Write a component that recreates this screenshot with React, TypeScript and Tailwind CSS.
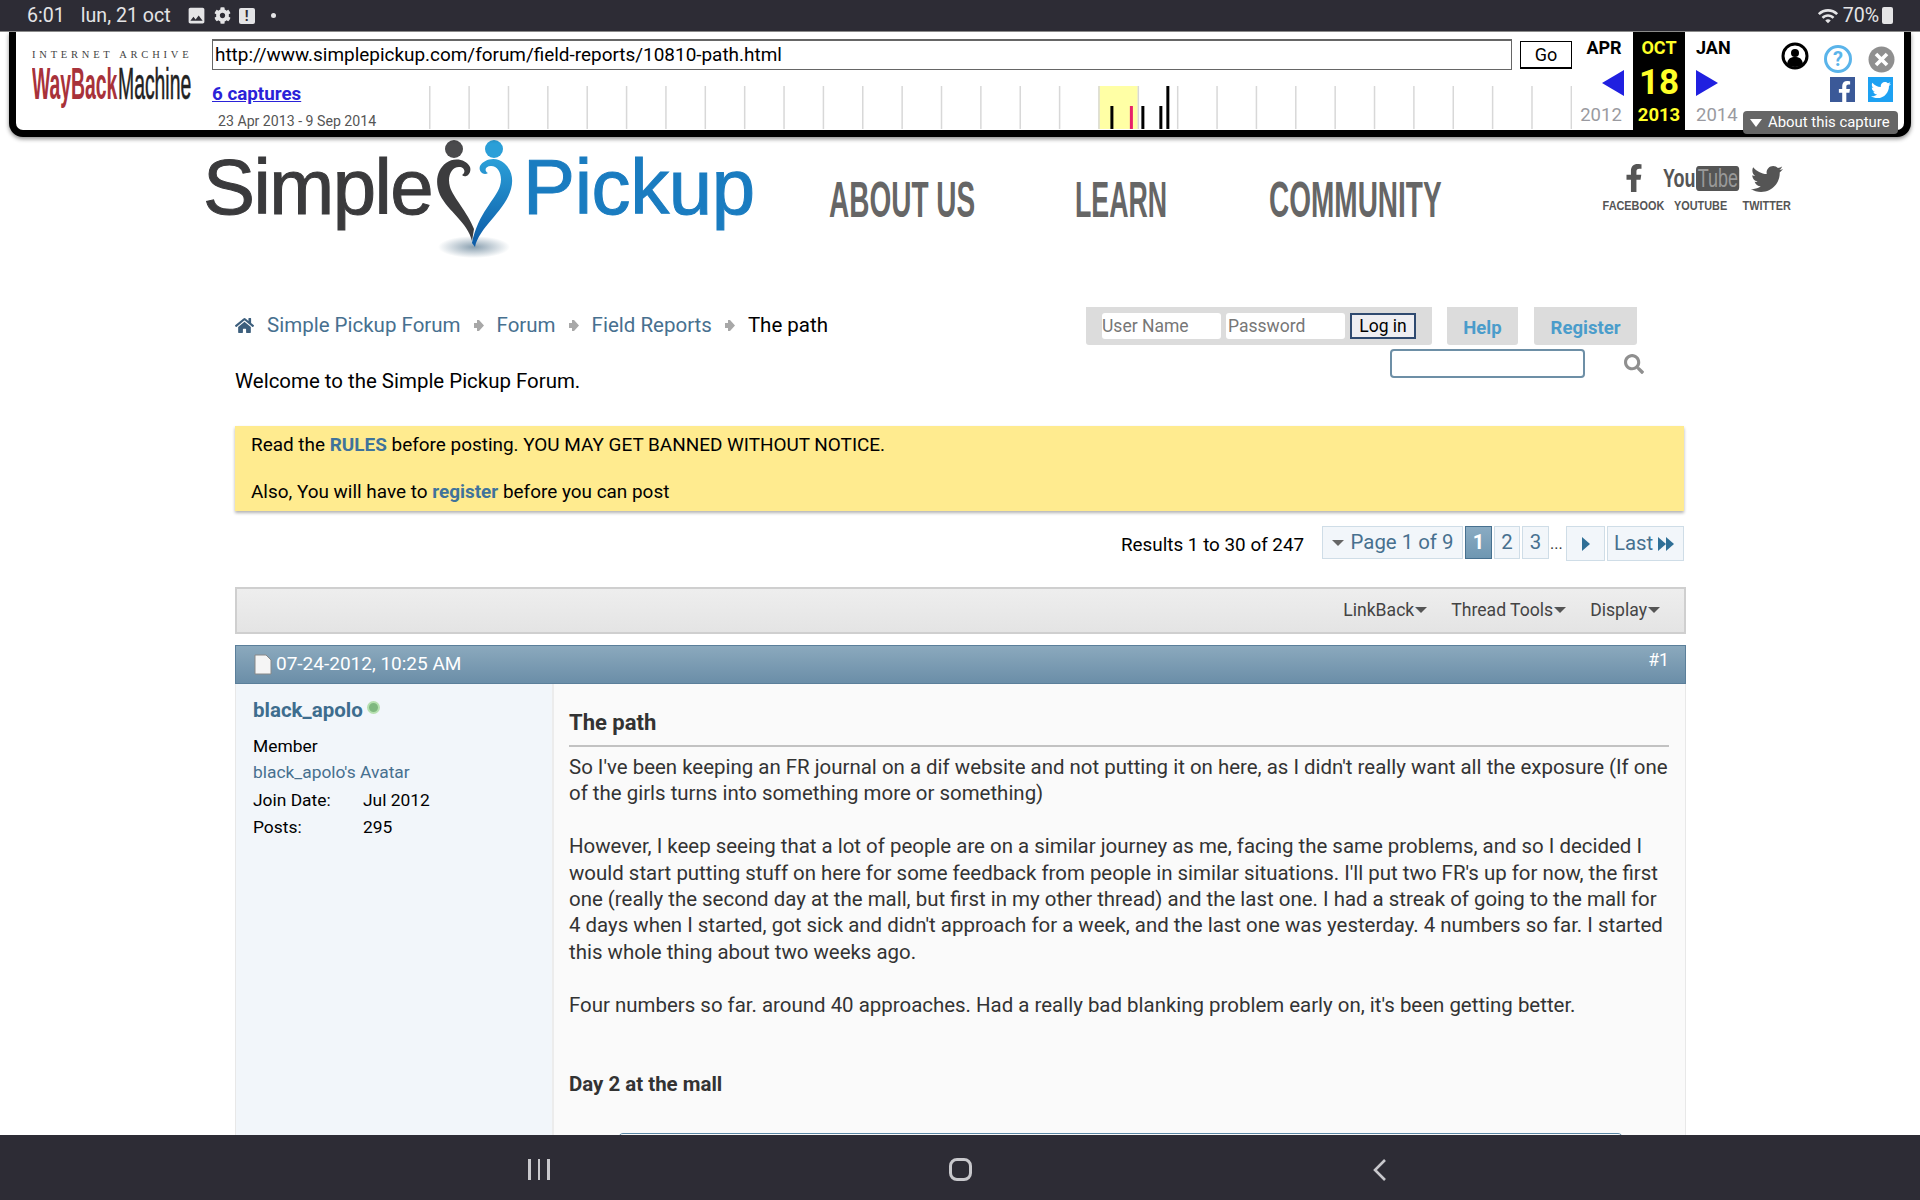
import { FaFacebookF, FaTwitter, FaHome, FaSearch, FaCog } from "react-icons/fa";
import { MdImage, MdWifi } from "react-icons/md";

const ticks = Array.from({ length: 31 }, (_, i) => i * 39.4);

function Caret({ className }: { className: string }) {
  return <span className={`inline-block w-0 h-0 border-x-[6px] border-x-transparent border-t-[6px] ${className}`} />;
}

// sparkline of captures under the url box
function Sparkline() {
  return (
    <svg width="1144" height="43" viewBox="0 0 1144 43" className="block">
      <rect x="670" y="0" width="39.4" height="43" fill="#ffffa5" />
      {ticks.map((x) => (
        <rect key={x} x={x} y="0" width="1.5" height="43" fill="#d8d8d8" />
      ))}
      <rect x="682" y="20" width="3" height="23" fill="#000" />
      <rect x="701.5" y="20" width="3" height="23" fill="#e8206a" />
      <rect x="713" y="20" width="3" height="23" fill="#000" />
      <rect x="731" y="20" width="3" height="23" fill="#000" />
      <rect x="738" y="0" width="3" height="43" fill="#000" />
    </svg>
  );
}

function WaybackBar() {
  return (
    <div className="relative z-10 mx-[9px] h-[105px] bg-white border-x-[7px] border-b-[7px] border-black rounded-b-[14px] shadow-[0_2px_4px_rgba(0,0,0,0.45)] flex">
      <div className="w-[196px] shrink-0 pl-[16px] pt-[15px]">
        <div className="w-[160px] text-[10.5px] leading-[16px] text-[#444] tracking-[0.36em] whitespace-nowrap font-['Liberation_Serif',serif]">INTERNET ARCHIVE</div>
        <div className="w-[160px] h-[42px] flex whitespace-nowrap font-['Liberation_Sans',sans-serif] text-[44px] leading-[42px]">
          <span className="w-[86px] inline-block origin-left scale-x-[0.44] font-bold text-[#a8323a]">WayBack</span>
          <span className="w-[73px] inline-block origin-left scale-x-[0.44] text-[#222] [-webkit-text-stroke:0.6px_#222]">Machine</span>
        </div>
      </div>
      <div className="w-[1360px] shrink-0 flex flex-col">
        <div className="flex pt-[7px] h-[54px] gap-[8px] items-start">
          <div className="w-[1301px] h-[31px] border border-[#666] border-t-2 px-[2px] text-[18.93px] leading-[27px] text-black whitespace-nowrap">http://www.simplepickup.com/forum/field-reports/10810-path.html</div>
          <div className="mt-[2px] w-[52px] h-[28px] border border-black border-b-2 text-center text-[18px] leading-[26px] text-black">Go</div>
        </div>
        <div className="flex">
          <div className="w-[217px] shrink-0 -mt-[2px]">
            <div className="text-[18.8px] font-bold leading-[20px] text-[#2a22d8] underline">6 captures</div>
            <div className="pl-[6px] pt-[9px] text-[14.15px] leading-[16px] text-[#555]">23 Apr 2013 - 9 Sep 2014</div>
          </div>
          <Sparkline />
        </div>
      </div>
      <div className="ml-[9px] w-[52px] shrink-0 flex flex-col items-center font-bold">
        <div className="pt-[6px] pr-[6px] text-[18px] leading-[20px] text-black">APR</div>
        <div className="flex-1 w-full flex items-center justify-end pt-[3px] pr-[9px]">
          <span className="w-0 h-0 border-y-[13px] border-y-transparent border-r-[22px] border-r-[#2020e0]" />
        </div>
        <div className="pb-[4px] pr-[12px] text-[18.5px] leading-[22px] font-normal text-[#9a9aa0] whitespace-nowrap">2012</div>
      </div>
      <div className="w-[52px] shrink-0 bg-black flex flex-col items-center font-bold text-[#ffff28]">
        <div className="pt-[6px] text-[18px] leading-[20px]">OCT</div>
        <div className="flex-1 flex items-center pt-[2px] text-[35px] leading-none">18</div>
        <div className="pb-[4px] text-[18.5px] leading-[22px]">2013</div>
      </div>
      <div className="w-[56px] shrink-0 flex flex-col items-start pl-[11px] font-bold">
        <div className="pt-[6px] text-[18px] leading-[20px] text-black">JAN</div>
        <div className="flex-1 flex items-center pt-[3px]">
          <span className="w-0 h-0 border-y-[13px] border-y-transparent border-l-[22px] border-l-[#2020e0]" />
        </div>
        <div className="pb-[4px] text-[18.5px] leading-[22px] font-normal text-[#9a9aa0]">2014</div>
      </div>
      <div className="flex-1 pt-[10px] pl-[40px]">
        <div className="flex items-start">
          <svg width="28" height="28" viewBox="0 0 28 28">
            <circle cx="14" cy="14" r="12" fill="#fff" stroke="#000" strokeWidth="3" />
            <circle cx="14" cy="11" r="4" fill="#000" />
            <path d="M6 22c1-6 4-7 8-7s7 1 8 7a12 12 0 0 1-16 0z" fill="#000" />
          </svg>
          <div className="ml-[15px] mt-[3px] w-[28px] h-[28px] rounded-full border-[3px] border-[#5ab4ea] text-[#5ab4ea] text-center text-[20px] leading-[22px] font-bold">?</div>
          <svg width="27" height="27" viewBox="0 0 27 27" className="ml-[16px] mt-[4px]">
            <circle cx="13.5" cy="13.5" r="13" fill="#8f8f8f" />
            <path d="M8 8l11 11M19 8L8 19" stroke="#fff" strokeWidth="3.6" />
          </svg>
        </div>
        <div className="flex pl-[49px] pt-[4px] gap-[13px]">
          <div className="w-[25px] h-[25px] bg-[#3b5998] flex items-end justify-end text-white"><FaFacebookF size={21} /></div>
          <div className="w-[25px] h-[25px] bg-[#1da1f2] flex items-center justify-center text-white"><FaTwitter size={20} /></div>
        </div>
      </div>
      <div className="absolute left-[1727px] top-[79px] w-[155px] h-[23px] rounded-[4px] bg-[#666] flex items-center pl-[7px] gap-[6px] text-white text-[14.9px] whitespace-nowrap">
        <Caret className="border-t-white border-t-[8px]" />
        About this capture
      </div>
    </div>
  );
}

function StatusBar() {
  return (
    <div className="h-[32px] shrink-0 bg-[#2d2c35] border-b border-[#8a8a8a] flex items-center pl-[27px] pr-[27px] text-[19.6px] text-[#e4e4e6]">
      <span>6:01</span>
      <span className="ml-[16px]">lun, 21 oct</span>
      <MdImage size={21} className="ml-[15px]" />
      <FaCog size={17} className="ml-[7px]" />
      <span className="ml-[8px] w-[16px] h-[16px] rounded-[2px] bg-[#e4e4e6] text-[#2d2c35] text-center text-[14px] leading-[16px] font-bold">!</span>
      <span className="ml-[16px] w-[5px] h-[5px] rounded-full bg-[#e4e4e6]" />
      <MdWifi size={22} className="ml-auto" />
      <span className="ml-[4px]">70%</span>
      <span className="ml-[3px] w-[11px] h-[17px] rounded-[2px] bg-[#e4e4e6]" />
    </div>
  );
}

function LogoHeart() {
  return (
    <svg width="84" height="122" viewBox="0 0 84 122" className="shrink-0">
      <defs>
        <radialGradient id="shade">
          <stop offset="0" stopColor="#8aa0b0" />
          <stop offset="1" stopColor="#8aa0b0" stopOpacity="0" />
        </radialGradient>
        <linearGradient id="blue" x1="0" y1="0" x2="0" y2="1">
          <stop offset="0" stopColor="#2b9fd8" />
          <stop offset="1" stopColor="#0c5aa6" />
        </linearGradient>
      </defs>
      <ellipse cx="38" cy="110" rx="36" ry="11" fill="url(#shade)" />
      <circle cx="18" cy="12" r="9" fill="#4a4a4c" />
      <circle cx="58" cy="12" r="9" fill="#2b9fd8" />
      <path d="M10 26c8-6 20-4 24 4 2 6-4 12-8 8 4-2 3-8-3-8-8 0-12 10-9 20 3 10 18 26 24 42l-2 12c-4-18-24-30-32-46C-2 44 2 32 10 26z" fill="#3c3c3e" />
      <path d="M68 26c-8-7-20-4-24 3-2 6 4 10 8 7-4-2-3-7 3-7 8 0 12 10 9 20-4 13-22 27-28 57l3 4c4-20 30-36 36-58 3-11 0-20-7-26z" fill="url(#blue)" />
    </svg>
  );
}

function Header() {
  return (
    <div className="h-[170px] flex items-start pl-[203px]">
      <div className="w-[552px] shrink-0 flex items-start text-[78px] leading-[80px] font-['Liberation_Sans',sans-serif]">
        <span className="w-[233px] mt-[10px] tracking-[-0.02em] whitespace-nowrap text-[#3a3a3c] [-webkit-text-stroke:1px_#3a3a3c]">Simple</span>
        <LogoHeart />
        <span className="ml-[3px] mt-[10px] tracking-[-0.005em] whitespace-nowrap text-[#1a7cc0] [-webkit-text-stroke:1px_#1a7cc0]">Pickup</span>
      </div>
      <nav className="flex font-['Liberation_Sans',sans-serif] font-bold text-[#666] text-[50px] leading-[56px] pt-[35px] whitespace-nowrap">
        <span className="ml-[74px] w-[145px] inline-block origin-left scale-x-[0.56]">ABOUT US</span>
        <span className="ml-[101px] w-[93px] inline-block origin-left scale-x-[0.535]">LEARN</span>
        <span className="ml-[101px] w-[172px] inline-block origin-left scale-x-[0.56]">COMMUNITY</span>
      </nav>
      <div className="ml-[162px] flex font-['Liberation_Sans',sans-serif] text-[#555] font-bold text-[12.5px] leading-[14px] pt-[29px] whitespace-nowrap">
        <div className="w-[61px] flex flex-col items-center">
          <FaFacebookF size={28} className="-mt-[2px] -mb-[1px]" />
          <span className="mt-[8px] scale-x-[0.87]">FACEBOOK</span>
        </div>
        <div className="ml-[7px] w-[60px] flex flex-col items-center">
          <div className="h-[25px] flex items-center text-[25px] leading-none scale-x-[0.72]">You<span className="ml-[1px] px-[2px] rounded-[4px] bg-[#555] text-[#999] font-normal">Tube</span></div>
          <span className="mt-[8px] scale-x-[0.87]">YOUTUBE</span>
        </div>
        <div className="ml-[11px] w-[50px] flex flex-col items-center">
          <FaTwitter size={32} className="-mt-[3px] -mb-[2px]" />
          <span className="mt-[6px] scale-x-[0.87]">TWITTER</span>
        </div>
      </div>
    </div>
  );
}

function Crumb({ children }: { children: string }) {
  return <span className="text-[#47708f]">{children}</span>;
}

function CrumbSep() {
  return (
    <svg width="10" height="13" viewBox="0 0 10 13" className="mx-[13px] shrink-0">
      <path d="M3 1h2l5 5.5L5 12H3V9H0V4h3z" fill="#a8a8a8" />
    </svg>
  );
}

function TopRow() {
  return (
    <div className="h-[119px] flex justify-between pr-[275px] pl-[235px]">
      <div>
        <div className="h-[36px] flex items-center text-[20.5px]">
          <FaHome size={19} className="text-[#3d5f7d] mr-[13px]" />
          <Crumb>Simple Pickup Forum</Crumb>
          <CrumbSep />
          <Crumb>Forum</Crumb>
          <CrumbSep />
          <Crumb>Field Reports</Crumb>
          <CrumbSep />
          <span className="text-black">The path</span>
        </div>
        <div className="mt-[25px] text-[20.45px] leading-[26px] text-black">Welcome to the Simple Pickup Forum.</div>
      </div>
      <div className="w-[559px] shrink-0">
        <div className="flex">
          <div className="w-[346px] h-[38px] bg-[#dcdcdc] rounded-b-[3px] flex items-center gap-[5px] pl-[16px] text-[17.5px]">
            <div className="w-[119px] h-[26px] bg-white rounded-[3px] text-[#777] leading-[26px]">User Name</div>
            <div className="w-[119px] h-[26px] bg-white rounded-[3px] text-[#777] leading-[26px] pl-[2px]">Password</div>
            <div className="w-[66px] h-[26px] bg-[#eeeef2] border-2 border-[#2f4a70] text-center text-black leading-[22px]">Log in</div>
          </div>
          <div className="ml-[15px] w-[71px] h-[38px] bg-[#dcdcdc] rounded-b-[3px] text-center font-bold text-[18.5px] leading-[42px] text-[#4a9ccb]">Help</div>
          <div className="ml-[16px] w-[103px] h-[38px] bg-[#dcdcdc] rounded-b-[3px] text-center font-bold text-[18.5px] leading-[42px] text-[#4a9ccb]">Register</div>
        </div>
        <div className="flex items-center mt-[4px] pl-[304px]">
          <div className="w-[195px] h-[29px] rounded-[4px] border-2 border-[#6d8fa6] bg-white" />
          <FaSearch size={20} className="ml-[39px] text-[#8f8f8f]" />
        </div>
      </div>
    </div>
  );
}

function Notice() {
  return (
    <div className="mx-[235px] w-[1449px] h-[85px] bg-[#ffeb8f] shadow-[0_2px_3px_rgba(0,0,0,0.3)] pl-[16px] pt-[7px] text-[18.93px] leading-[23px] text-black">
      <div>Read the <b className="text-[#3f739b] font-bold">RULES</b> before posting. YOU MAY GET BANNED WITHOUT NOTICE.</div>
      <div className="mt-[24px]">Also, You will have to <b className="text-[#3f739b] font-bold">register</b> before you can post</div>
    </div>
  );
}

function PageBox({ children, className }: { children: React.ReactNode; className: string }) {
  return <div className={`h-[33px] flex items-center justify-center bg-[#f2f6fa] border border-[#cfdde7] text-[#47708f] text-[20.4px] ${className}`}>{children}</div>;
}

function Pagination() {
  return (
    <div className="mt-[15px] h-[35px] flex justify-end items-start pr-[236px] text-black">
      <div className="w-[201px] h-[35px] text-[18.85px] leading-[38px] whitespace-nowrap">Results 1 to 30 of 247</div>
      <PageBox className="w-[141px] gap-[7px]">
        <Caret className="border-t-[#666]" />
        Page 1 of 9
      </PageBox>
      <div className="ml-[2px] w-[27px] h-[33px] bg-gradient-to-b from-[#8aabc2] to-[#6f97b2] border border-[#46708f] text-white text-center font-bold text-[20px] leading-[31px]">1</div>
      <PageBox className="ml-[2px] w-[26px]">2</PageBox>
      <PageBox className="ml-[2px] w-[27px]">3</PageBox>
      <div className="ml-[1px] w-[16px] text-[16px] leading-[36px] text-[#333]">...</div>
      <PageBox className="w-[39px] h-[35px]">
        <span className="w-0 h-0 border-y-[7px] border-y-transparent border-l-[8px] border-l-[#2f6f96]" />
      </PageBox>
      <PageBox className="ml-[2px] w-[77px] h-[35px] gap-[5px] !justify-start pl-[6px]">
        Last
        <span className="flex">
          <span className="w-0 h-0 border-y-[7px] border-y-transparent border-l-[8px] border-l-[#2f6f96]" />
          <span className="w-0 h-0 border-y-[7px] border-y-transparent border-l-[8px] border-l-[#2f6f96]" />
        </span>
      </PageBox>
    </div>
  );
}

function ThreadTools() {
  return (
    <div className="mt-[26px] mx-[235px] w-[1451px] h-[47px] bg-gradient-to-b from-[#eeeeee] to-[#e4e4e4] border-2 border-[#cfcfcf] flex items-center justify-end pr-[24px] gap-[24px] text-[17.6px] text-[#444]">
      <span className="flex items-center gap-[1px]">LinkBack<Caret className="border-t-[#555]" /></span>
      <span className="flex items-center gap-[1px]">Thread Tools<Caret className="border-t-[#555]" /></span>
      <span className="flex items-center gap-[1px]">Display<Caret className="border-t-[#555]" /></span>
    </div>
  );
}

function Post() {
  return (
    <div className="mt-[11px] mx-[235px] w-[1451px]">
      <div className="h-[39px] bg-gradient-to-b from-[#8ba9bd] to-[#6b8ea8] border border-[#5b7f9a] flex items-center justify-between pl-[18px] pr-[16px] text-white">
        <div className="flex items-center gap-[4px] text-[19px]">
          <svg width="18" height="21" viewBox="0 0 18 21">
            <path d="M1 1h11l5 5v14H1z" fill="#f5f5f5" stroke="#888" strokeWidth="1" />
          </svg>
          07-24-2012, 10:25 AM
        </div>
        <span className="text-[17.6px] -mt-[8px]">#1</span>
      </div>
      <div className="h-[451px] overflow-hidden flex border-x border-[#e8e8e8]">
        <div className="w-[318px] shrink-0 bg-[#f2f6fa] border-r-2 border-[#ececec] pl-[17px] pt-[12px] text-[17.4px] text-black">
          <div className="flex items-start h-[37px]">
            <b className="text-[20.5px] leading-[28px] font-bold text-[#3e6d8e]">black_apolo</b>
            <span className="ml-[4px] mt-[5px] w-[13px] h-[13px] rounded-full bg-[#7fb87f] border-2 border-[#b7e0b0]" />
          </div>
          <div className="leading-[26px]">Member</div>
          <div className="leading-[26px] text-[#47708f]">black_apolo's Avatar</div>
          <div className="leading-[28px] flex mt-[1px]"><span className="w-[110px]">Join Date:</span>Jul 2012</div>
          <div className="leading-[27px] flex"><span className="w-[110px]">Posts:</span>295</div>
        </div>
        <div className="flex-1 bg-[#fafafa] pl-[15px] pr-[16px] pt-[25px] text-[#333]">
          <div className="h-[38px] text-[22px] font-bold leading-[28px] border-b-2 border-[#c2c2c2] text-[#333]">The path</div>
          <div className="pt-[7px] text-[20.47px] leading-[26.4px]">
            <p>So I've been keeping an FR journal on a dif website and not putting it on here, as I didn't really want all the exposure (If one of the girls turns into something more or something)</p>
            <p className="mt-[26.4px]">However, I keep seeing that a lot of people are on a similar journey as me, facing the same problems, and so I decided I would start putting stuff on here for some feedback from people in similar situations. I'll put two FR's up for now, the first one (really the second day at the mall, but first in my other thread) and the last one. I had a streak of going to the mall for 4 days when I started, got sick and didn't approach for a week, and the last one was yesterday. 4 numbers so far. I started this whole thing about two weeks ago.</p>
            <p className="mt-[26.4px]">Four numbers so far. around 40 approaches. Had a really bad blanking problem early on, it's been getting better.</p>
            <p className="mt-[52.8px] font-bold">Day 2 at the mall</p>
            <div className="mt-[36px] ml-[49px] w-[1005px] h-[20px] border border-[#5a87a5] rounded-t-[5px]" />
          </div>
        </div>
      </div>
    </div>
  );
}

function NavBar() {
  return (
    <div className="h-[65px] shrink-0 bg-[#2d2c35] flex items-center pt-[4px]">
      <div className="ml-[528px] flex gap-[7px]">
        <span className="w-[2.5px] h-[21px] bg-[#c8c8cc]" />
        <span className="w-[2.5px] h-[21px] bg-[#c8c8cc]" />
        <span className="w-[2.5px] h-[21px] bg-[#c8c8cc]" />
      </div>
      <span className="ml-[399px] w-[23px] h-[23px] rounded-[8px] border-[3px] border-[#c8c8cc]" />
      <svg width="14" height="24" viewBox="0 0 14 24" className="ml-[401px]" fill="none">
        <path d="M12 2L2 12l10 10" stroke="#c8c8cc" strokeWidth="2.6" />
      </svg>
    </div>
  );
}

export default function App() {
  return (
    <div className="w-[1920px] h-[1200px] flex flex-col overflow-hidden bg-white font-[Roboto,sans-serif]">
      <StatusBar />
      <div className="flex-1 min-h-0 overflow-hidden">
        <WaybackBar />
        <Header />
        <TopRow />
        <Notice />
        <Pagination />
        <ThreadTools />
        <Post />
      </div>
      <NavBar />
    </div>
  );
}
